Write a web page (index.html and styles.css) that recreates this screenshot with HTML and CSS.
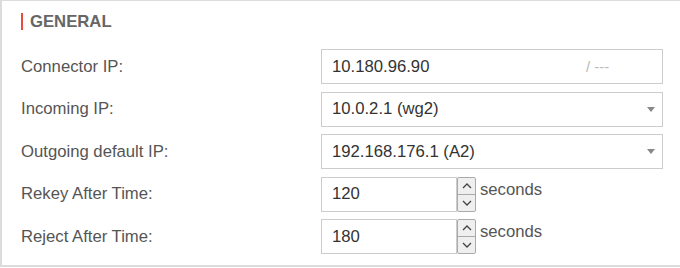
FILE: index.html
```html
<!DOCTYPE html>
<html lang="en">
<head>
    <meta charset="UTF-8">
    <meta name="viewport" content="width=device-width, initial-scale=1.0">
    <title>General</title>
    <link rel="stylesheet" href="styles.css">
</head>
<body>
    <div class="panel">
        <div class="panel-title">
            <span class="title-bar"></span>
            <span>GENERAL</span>
        </div>

        <div class="form">
            <label class="label">Connector IP:</label>
            <div class="field">
                <span class="value">10.180.96.90</span>
                <span class="suffix">/ ---</span>
            </div>

            <label class="label">Incoming IP:</label>
            <div class="field select">
                <span class="value">10.0.2.1 (wg2)</span>
                <span class="caret"></span>
            </div>

            <label class="label">Outgoing default IP:</label>
            <div class="field select">
                <span class="value">192.168.176.1 (A2)</span>
                <span class="caret"></span>
            </div>

            <label class="label">Rekey After Time:</label>
            <div class="number-row">
                <div class="field number"><span class="value">120</span></div>
                <div class="spinner">
                    <span class="spin-btn">
                        <svg width="10" height="6" viewBox="0 0 10 6"><path d="M1 5L5 1L9 5" fill="none" stroke="#444" stroke-width="1.3"/></svg>
                    </span>
                    <span class="spin-btn">
                        <svg width="10" height="6" viewBox="0 0 10 6"><path d="M1 1L5 5L9 1" fill="none" stroke="#444" stroke-width="1.3"/></svg>
                    </span>
                </div>
                <span class="unit">seconds</span>
            </div>

            <label class="label">Reject After Time:</label>
            <div class="number-row">
                <div class="field number"><span class="value">180</span></div>
                <div class="spinner">
                    <span class="spin-btn">
                        <svg width="10" height="6" viewBox="0 0 10 6"><path d="M1 5L5 1L9 5" fill="none" stroke="#444" stroke-width="1.3"/></svg>
                    </span>
                    <span class="spin-btn">
                        <svg width="10" height="6" viewBox="0 0 10 6"><path d="M1 1L5 5L9 1" fill="none" stroke="#444" stroke-width="1.3"/></svg>
                    </span>
                </div>
                <span class="unit">seconds</span>
            </div>
        </div>
    </div>
</body>
</html>
```

FILE: styles.css
```css
body {
    margin: 0;
    background: #fff;
    font-family: 'Liberation Sans', Arial, sans-serif;
    font-size: 16.7px;
    overflow: hidden;
}

/* panel continues past the right edge, so no right border */
.panel {
    border-top: 1px solid #dcdcdc;
    border-left: 2px solid #dcdcdc;
    border-bottom: 2px solid #dcdcdc;
    padding: 12px 0 11px 19px;
}

.panel-title {
    display: flex;
    align-items: center;
    height: 17px;
    line-height: 17px;
    font-weight: bold;
    color: #666;
}

.title-bar {
    width: 2px;
    height: 17px;
    background: #e74c3c;
    margin-right: 7px;
}

.form {
    display: grid;
    grid-template-columns: 300px 342px;
    grid-auto-rows: 35px;
    row-gap: 7.5px;
    margin-top: 19px;
}

.label {
    display: flex;
    align-items: center;
    color: #555;
}

.field {
    display: flex;
    align-items: center;
    box-sizing: border-box;
    height: 35px;
    border: 1px solid #ccc;
    padding: 0 0 0 10px;
    color: #333;
    background: #fff;
}

.field .value {
    flex: 1;
}

.suffix {
    width: 76px;
    color: #bbb;
    font-size: 15px;
}

.caret {
    width: 0;
    height: 0;
    border-left: 4px solid transparent;
    border-right: 4px solid transparent;
    border-top: 5px solid #888;
    margin-right: 7px;
}

.number-row {
    display: flex;
}

.field.number {
    width: 136px;
}

.spinner {
    display: flex;
    flex-direction: column;
    box-sizing: border-box;
    width: 19px;
    height: 35px;
    border: 1px solid #aaa;
    border-radius: 2px;
    background: #efefef;
}

.spin-btn {
    flex: 1;
    display: flex;
    align-items: center;
    justify-content: center;
}

.spin-btn + .spin-btn {
    border-top: 1px solid #aaa;
}

.unit {
    margin-left: 4px;
    margin-top: 3px;
    line-height: 20px;
    color: #555;
}
```
